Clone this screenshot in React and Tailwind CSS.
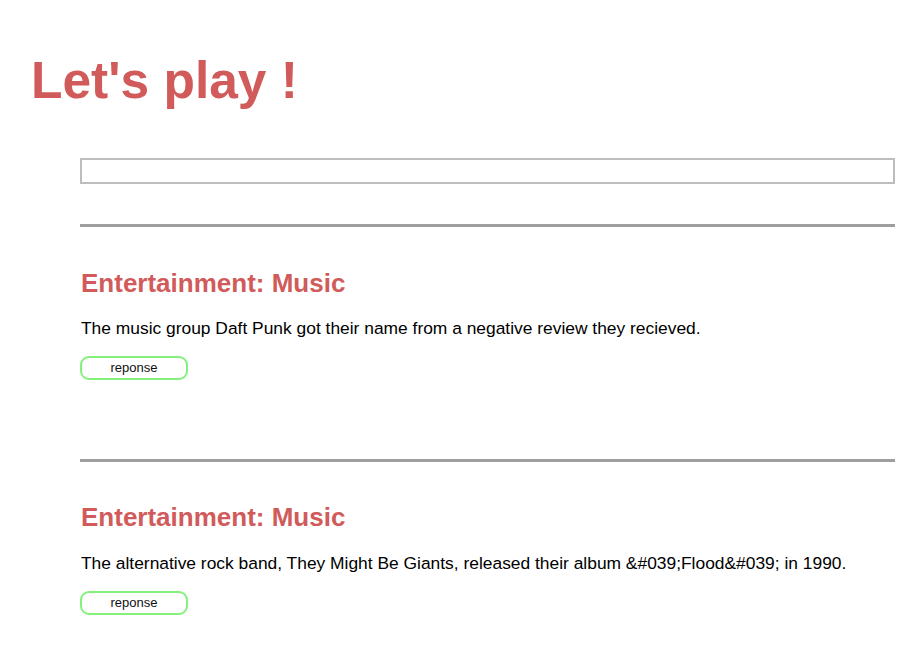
export default function App() {
  const items = [
    "The music group Daft Punk got their name from a negative review they recieved.",
    "The alternative rock band, They Might Be Giants, released their album &#039;Flood&#039; in 1990.",
  ];
  return (
    <div className="bg-white min-h-[650px] font-['Liberation_Sans',Arial,sans-serif] text-black">
      <h1 className="pl-[31px] pt-[47px] text-[51.5px] leading-[66px] font-bold text-[#d15b5b]">Let's play !</h1>
      <div className="pl-[80px] pr-[5px] pt-[45px]">
        <div className="h-[26px] border-2 border-[#bdbdbd]"></div>
        {items.map((t, i) => (
          <div key={i}>
            <div className={i === 0 ? "mt-[40px] h-[3px] bg-[#9e9e9e]" : "mt-[79px] h-[3px] bg-[#9e9e9e]"}></div>
            <h2 className={i === 0 ? "mt-[41px] text-[26px] leading-[30px] font-bold text-[#d15b5b] pl-[1px]" : "mt-[40px] text-[26px] leading-[30px] font-bold text-[#d15b5b] pl-[1px]"}>Entertainment: Music</h2>
            <p className={i === 0 ? "mt-[20px] text-[17.4px] leading-[20px] pl-[1px]" : "mt-[21px] text-[17.4px] leading-[20px] pl-[1px]"}>{t}</p>
            <button className="mt-[18px] w-[108px] h-[24px] border-2 border-[#84f27a] rounded-[9px] text-[13px] leading-[18px] text-[#111] flex items-center justify-center bg-white">reponse</button>
          </div>
        ))}
      </div>
    </div>
  );
}
